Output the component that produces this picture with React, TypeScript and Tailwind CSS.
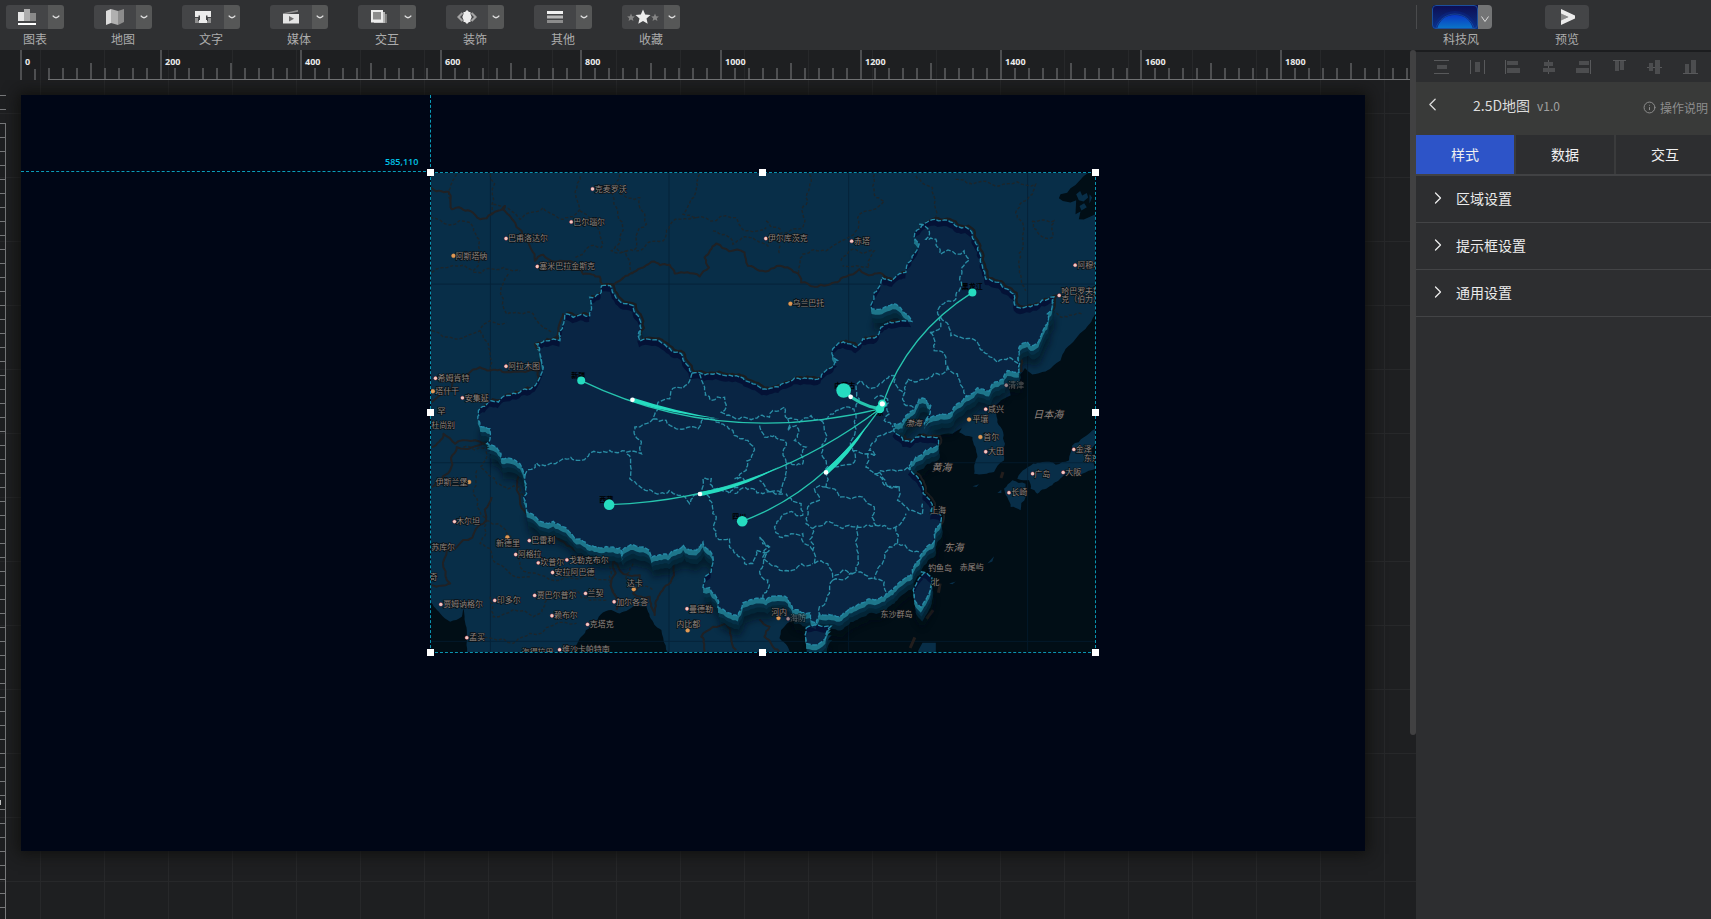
import type { ReactNode } from "react";
import { ChevronLeft, ChevronRight, Info } from "lucide-react";

/* ---------- toolbar icons ---------- */

const ChartIcon = () => (
  <svg width="18" height="16" viewBox="0 0 18 16">
    <path d="M0 3h6v9H0z" fill="#e6e6e6" />
    <path d="M6 0h6v12H6z" fill="#adadad" />
    <path d="M12 4h6v8h-6z" fill="#8a8a8a" />
    <path d="M0 14h18v2H0z" fill="#fff" />
  </svg>
);
const MapIcon = () => (
  <svg width="18" height="16" viewBox="0 0 18 16">
    <path d="M0 2l5-2v14l-5 2z" fill="#dcdcdc" />
    <path d="M5 0l7 2v14l-7-2z" fill="#b0b0b0" />
    <path d="M12 2l6-2v13l-6 3z" fill="#8c8c8c" />
  </svg>
);
const TextIcon = () => (
  <svg width="16" height="12" viewBox="0 0 16 12">
    <path d="M0 0h16v6h-3.500V4.500H11V9h1v3H4V9h1V4.500H3.500V6H0z" fill="#ececec" />
    <path d="M0 7h3v3h1v2H0zM16 7h-3v3h-1v2h4z" fill="#8f8f8f" />
  </svg>
);
const MediaIcon = () => (
  <svg width="16" height="14" viewBox="0 0 16 14">
    <path d="M0 3.2L15 0v1.8L3 4H0z" fill="#8f8f8f" />
    <path d="M0 4h16v9.5H0z" fill="#e4e4e4" />
    <path d="M6 6l5 2.8L6 11.5z" fill="#6e6e6e" />
  </svg>
);
const InteractIcon = () => (
  <svg width="16" height="14" viewBox="0 0 16 14">
    <path d="M12 2h2v11H3v-1h9z" fill="#b5b5b5" />
    <path d="M14 4h2v9h-2z" fill="#808080" />
    <path d="M0 0h12v12.5H0z" fill="#ececec" />
    <path d="M2 2h8v7.500H2z" fill="#8c8c8c" />
  </svg>
);
const DecorIcon = () => (
  <svg width="20" height="14" viewBox="0 0 20 14">
    <path d="M5.500 3L1.500 7l4 4M14.500 3l4 4-4 4" fill="none" stroke="#a3a3a3" strokeWidth="2.200" />
    <path d="M10 0l2 2h1.500v2l1.200 3-1.200 3v2H12l-2 2-2-2H6.500v-2L5.300 7l1.200-3V2H8z" fill="#ececec" />
  </svg>
);
const OtherIcon = () => (
  <svg width="16" height="12" viewBox="0 0 16 12">
    <path d="M0 0h16v3H0z" fill="#f0f0f0" />
    <path d="M0 4.500h16v3H0z" fill="#b8b8b8" />
    <path d="M0 9h16v3H0z" fill="#8c8c8c" />
  </svg>
);
const STAR = "M0-7.500L2.200-2.400 7.500-2 3.500 1.500 4.700 6.700 0 3.900-4.700 6.700-3.500 1.500-7.500-2-2.200-2.400z";
const StarsIcon = () => (
  <svg width="32" height="16" viewBox="-16 -8 32 16">
    <path d={STAR} fill="#ececec" />
    <path d={STAR} fill="#858585" transform="translate(-12 .5) scale(.52)" />
    <path d={STAR} fill="#858585" transform="translate(12 .5) scale(.52)" />
  </svg>
);

const tools: { label: string; icon: ReactNode }[] = [
  { label: "图表", icon: <ChartIcon /> },
  { label: "地图", icon: <MapIcon /> },
  { label: "文字", icon: <TextIcon /> },
  { label: "媒体", icon: <MediaIcon /> },
  { label: "交互", icon: <InteractIcon /> },
  { label: "装饰", icon: <DecorIcon /> },
  { label: "其他", icon: <OtherIcon /> },
  { label: "收藏", icon: <StarsIcon /> },
];

function Toolbar() {
  return (
    <header className="flex h-[50px] shrink-0 justify-between bg-[#2f3032] pt-[5px]">
      <div className="flex gap-[30px] pl-1.5">
        {tools.map((t) => (
          <div key={t.label} className="flex w-[58px] flex-col items-center">
            <div className="flex h-6 w-full overflow-hidden rounded-[3px]">
              <button aria-label={t.label} className="flex w-[42px] items-center justify-center bg-[#444547]">
                {t.icon}
              </button>
              <button aria-label={`${t.label} 更多`} className="flex flex-1 items-center justify-center bg-[#565757] text-[#dedede]">
                <svg width="8" height="4" viewBox="0 0 8 4">
                  <path d="M.7.7Q4 4.800 7.300.7" fill="none" stroke="currentColor" strokeWidth="1.300" />
                </svg>
              </button>
            </div>
            <span className="text-xs leading-[19px] text-[#acacac]">{t.label}</span>
          </div>
        ))}
      </div>
      <div className="flex w-[295px] gap-[53px]">
        <div className="flex gap-[15px]">
          <div className="h-6 w-px bg-[#4a4b4d]" />
          <div className="flex w-[60px] flex-col items-center">
            <button aria-label="科技风" className="flex h-6 w-full overflow-hidden rounded-[4px]">
              <svg width="46" height="24" viewBox="0 0 46 24">
                <defs>
                  <linearGradient id="sky" x1="0" y1="0" x2="0" y2="1">
                    <stop offset="0" stopColor="#0d0d52" />
                    <stop offset="1" stopColor="#0a3488" />
                  </linearGradient>
                  <linearGradient id="sun" x1="0" y1="0" x2="0" y2="1">
                    <stop offset="0" stopColor="#0a38c4" />
                    <stop offset="1" stopColor="#0a78c8" />
                  </linearGradient>
                </defs>
                <path d="M0 0h46v24H0z" fill="url(#sky)" />
                <circle cx="23" cy="29" r="23" fill="#0c2f9a" opacity=".35" />
                <circle cx="23" cy="29" r="20" fill="none" stroke="#1a58a8" opacity=".6" />
                <path d="M5 24Q9 10 23 10t18 14z" fill="url(#sun)" />
                <rect x=".5" y=".5" width="45" height="23" rx="3.500" fill="none" stroke="#1b4f9c" />
              </svg>
              <span className="flex h-full flex-1 items-center justify-center bg-[#737475] pt-1 text-[#dcdcdc]">
                <svg width="8" height="7" viewBox="0 0 8 7">
                  <path d="M.5.5L4 5.500 7.500.5" fill="none" stroke="currentColor" />
                </svg>
              </span>
            </button>
            <span className="pr-0.5 text-xs leading-[19px] text-[#acacac]">科技风</span>
          </div>
        </div>
        <div className="flex flex-col items-center">
          <button aria-label="预览" className="flex h-6 w-11 items-center justify-center rounded-[4px] bg-[#444547] pl-0.5">
            <svg width="14" height="16" viewBox="0 0 14 16">
              <path d="M0 4l7 4-7 4z" fill="#8a8a8a" />
              <path d="M0 0l14 6.500v3L0 16v-4.500L7.500 8 0 4.500z" fill="#ececec" />
            </svg>
          </button>
          <span className="text-xs leading-[19px] text-[#acacac]">预览</span>
        </div>
      </div>
    </header>
  );
}

/* ---------- rulers ---------- */

const TEN = [0, 1, 2, 3, 4, 5, 6, 7, 8, 9];

function HorizontalRuler() {
  return (
    <div className="mr-1.5 flex h-[30px] shrink-0 overflow-hidden pl-5">
      {TEN.map((m) => (
        <div key={m} className="relative flex w-[140px] shrink-0">
          {TEN.map((i) => (
            <div
              key={i}
              className={`flex w-3.5 items-end ${m === 0 && i < 2 ? "" : "border-b border-[#6f7072]"}`}
            >
              <div
                className={`w-0.5 bg-[#4e4f51] ${i === 0 ? "h-[30px]" : i === 5 ? "h-4" : "h-[11px]"}`}
              />
            </div>
          ))}
          <span className="absolute left-[5px] top-1.5 font-[Open_Sans,Noto_Sans,sans-serif] text-[9px] font-bold leading-[11px] text-[#ececec]">
            {m * 200}
          </span>
        </div>
      ))}
    </div>
  );
}

const verticalTicks = Array.from({ length: 59 }, (_, i) => i);

function VerticalRuler() {
  return (
    <div className="mt-[15px] flex w-1.5 shrink-0 flex-col overflow-hidden">
      {verticalTicks.map((i) => (
        <div
          key={i}
          className={`flex h-3.5 shrink-0 items-center border-t border-t-[#77787a] ${i < 2 ? "" : "border-r border-r-[#77787a]"}`}
        >
          {i === 50 && <div className="h-[5px] w-px bg-[#c0c0c0]" />}
        </div>
      ))}
    </div>
  );
}

/* ---------- map geometry ---------- */

type Pt = [number, number];

const parse = (s: string): Pt[] => s.trim().split(/\s+/).map((p) => p.split(",").map(Number) as Pt);

/* Midpoint displacement gives the simplified outlines a natural, jagged coast. */
function rough(src: string, amount = 0.16, close = false) {
  let pts = parse(src);
  if (close) pts = [...pts, pts[0]];
  for (let pass = 0; pass < 3; pass++) {
    const next: Pt[] = [pts[0]];
    for (let i = 1; i < pts.length; i++) {
      const [ax, ay] = pts[i - 1];
      const [bx, by] = pts[i];
      const h = Math.sin(ax * 12.9 + ay * 78.2 + bx * 37.7 + by * 4.1) * 43758.5;
      const k = (h - Math.floor(h) - 0.5) * 2 * amount;
      if (Math.hypot(bx - ax, by - ay) > 12) {
        next.push([(ax + bx) / 2 - (by - ay) * k, (ay + by) / 2 + (bx - ax) * k]);
      }
      next.push([bx, by]);
    }
    pts = next;
  }
  return "M" + pts.map((p) => `${p[0].toFixed(1)} ${p[1].toFixed(1)}`).join("L") + (close ? "Z" : "");
}

const MAINLAND = rough(
  `545,405 572,405 578,425 603,455 640,465 655,495 663,515 655,555 660,572 735,582 765,605 785,610 795,635 817,668
  870,670 950,675 1000,700 1060,712 1125,683 1205,680 1225,655 1255,630 1240,615 1245,590 1258,577 1310,590 1330,565
  1365,562 1385,530 1440,512 1478,512 1465,492 1445,472 1430,460 1395,470 1380,476 1357,474 1355,463 1365,425 1388,380
  1420,390 1460,365 1475,330 1500,280 1484,262 1487,245 1515,218 1585,208 1615,228 1640,228 1660,250 1675,295 1690,345
  1700,385 1740,395 1765,415 1785,430 1795,470 1835,468 1870,448 1905,438 1900,460 1885,490 1870,545 1850,580 1835,585
  1825,573 1800,590 1802,640 1800,665 1785,665 1765,660 1755,685 1720,700 1710,722 1675,712 1650,735 1625,755 1600,782
  1565,790 1515,822 1530,795 1535,765 1520,745 1500,745 1480,780 1450,818 1425,820 1422,840 1440,855 1452,872 1475,875
  1490,860 1520,860 1555,862 1558,880 1535,892 1510,912 1475,935 1468,955 1490,975 1508,1005 1512,1030 1535,1055
  1540,1070 1535,1090 1565,1095 1560,1125 1545,1150 1540,1180 1510,1205 1500,1230 1480,1270 1450,1290 1410,1325
  1380,1345 1330,1358 1280,1385 1220,1395 1200,1392 1192,1420 1178,1415 1172,1388 1120,1378 1105,1345 1065,1338
  1040,1350 1000,1348 970,1358 955,1398 925,1388 895,1372 890,1340 870,1312 850,1312 855,1285 875,1265 880,1220
  870,1200 850,1175 830,1200 790,1183 745,1215 695,1223 680,1195 640,1183 615,1193 605,1218 600,1193 545,1193
  490,1173 455,1150 400,1113 385,1120 320,1085 310,1040 320,1030 315,975 300,940 245,925 235,900 200,880 210,865
  210,835 180,828 175,780 210,750 235,755 260,735 300,725 355,690 370,650 360,610 350,580 400,565 420,570 418,545
  435,490 460,500 510,495 510,440 540,430`,
  0.17,
  true,
);
const TAIWAN = rough("1505,1265 1522,1268 1538,1282 1530,1330 1515,1355 1505,1372 1485,1345 1482,1320 1500,1285 1515,1268", 0.08, true);
const HAINAN = rough("1160,1434 1195,1425 1235,1428 1218,1465 1200,1480 1160,1480 1158,1460", 0.12, true);
const CHINA = `${MAINLAND}${TAIWAN}${HAINAN}`;

const PROVINCES = [
  "817,668 805,700 770,710 750,745 715,755 712,780 700,805 645,830 665,875 665,910 620,905 570,900 530,905 480,930 425,928 400,940 350,938 315,975",
  "700,805 770,835 835,835 850,805 890,815 940,840 985,870 1000,910 980,960 945,985 975,990 930,1030 905,1020 880,1015 875,985 850,985 845,1025 810,1060 775,1035 720,1030 670,1015 630,985 620,910",
  "840,670 855,710 875,750 915,740 920,770 905,785 950,805 1020,795 1050,800 1060,780 1095,770 1105,805",
  "845,1025 870,1050 890,1100 890,1160 930,1165 950,1210 975,1240 1000,1240 1010,1200 1050,1200 1020,1260 1045,1290 1030,1345",
  "945,1030 1000,1015 1030,1030 1060,1025 1095,1030",
  "1020,825 1035,860 1095,870 1100,940 1095,990 1085,1030 1050,1025 1020,990",
  "1105,805 1105,840 1130,825 1125,870 1160,890 1150,940 1100,940",
  "1105,805 1140,815 1175,795 1205,810 1250,780 1290,770 1310,790",
  "1205,810 1215,840 1210,900 1220,965 1220,1010",
  "1310,790 1310,835 1300,900 1305,935 1270,945 1220,965",
  "1300,900 1345,910 1370,915 1350,900 1385,855 1422,840",
  "1345,910 1340,950 1365,970 1405,960 1460,955 1475,940",
  "1220,1010 1260,1040 1330,1040 1365,1070 1370,1125 1340,1125 1290,1125 1270,1135 1220,1115 1180,1135 1180,1200 1185,1240",
  "1220,1010 1185,1015 1200,1050 1170,1065 1160,1120 1180,1135",
  "1365,970 1390,995 1440,1010 1435,1050 1470,1080 1510,1092 1510,1060",
  "1440,1010 1400,1000 1380,965",
  "1370,1125 1420,1135 1430,1130 1460,1090",
  "1430,1130 1435,1180 1470,1200 1500,1205",
  "1315,1125 1310,1180 1310,1260 1365,1285",
  "1435,1180 1395,1210 1370,1270 1365,1285 1395,1295 1400,1325",
  "1185,1240 1225,1240 1240,1280 1310,1265",
  "1240,1290 1230,1330 1200,1370 1200,1392",
  "1240,1290 1310,1265",
  "1020,1160 1050,1190 1030,1220 1080,1260 1120,1260 1180,1240",
  "1180,1200 1150,1150 1080,1160 1065,1130 1085,1100 1150,1095 1145,1060 1100,1030",
  "1050,1190 1020,1165",
  "1500,220 1530,240 1520,265 1550,265 1565,310 1625,310 1635,300 1650,325 1628,370 1628,405 1605,450 1555,485 1565,530 1530,545 1545,600 1575,610 1585,650 1530,680 1480,690 1465,685 1450,740 1460,765 1490,775",
  "1565,500 1595,555 1675,575 1705,610 1735,635 1770,620 1800,640",
  "1585,645 1615,670 1630,710 1645,740",
  "1310,770 1320,745 1310,705 1325,690 1345,710 1400,685 1425,675 1435,710 1455,735",
  "1365,745 1385,735 1405,745 1410,790 1395,810 1422,830",
];
const PROVINCE_PATH = PROVINCES.map((p) => rough(p, 0.22)).join("");

const SEA = [
  rough("2090,470 2030,488 2000,535 1970,565 1940,595 1925,630 1880,663 1840,672 1818,652 1795,690 1770,712 1775,735 1720,770 1690,790 1600,850 1500,850 1450,900 1500,1100 1540,1200 1400,1380 1150,1400 1110,1415 1085,1440 1080,1465 1105,1490 1115,1530", 0.06) + "L1115 1600H2200V470Z",
  rough("25,1345 60,1390 90,1415 125,1400 130,1375 140,1440 147,1530", 0.06) + "L20 1600Z",
  rough("430,1530 480,1465 520,1420 575,1380 600,1390 650,1365 680,1370 690,1400 725,1440 758,1530", 0.12) + "Z",
  "M2030 50L1995 75L1970 102L1955 112L1945 125L1925 130L1920 142L1932 150L1955 155L1972 148L1970 190L1985 182L1980 205L1995 206L2030 190Z",
].join("");
const ISLANDS = [
  rough("1620,845 1670,790 1720,752 1735,815 1758,880 1755,930 1725,965 1665,970 1675,920 1660,860", 0.1, true),
  rough("1795,985 1820,955 1870,935 1950,930 1960,885 2030,835 2030,955 1990,970 1940,970 1920,990 1900,1005 1855,1030 1835,1015 1830,990", 0.14, true),
  rough("1755,1015 1780,990 1820,1000 1820,1040 1805,1080 1775,1070 1765,1040", 0.14, true),
  "M1510 1478H1550V1530H1490L1498 1500Z",
  "M1972 130l12-10 6 14 14-8 4 14-14 12-14-4zM1982 165l14-8 8 12-16 10zM2012 130l8 10-8 18zM1660 1008l20-6-8 8zM1705 1240l20-22-5 16zM1590 1300l20-6-10 8zM1735 1028l12-10 0 10z",
].join("");

const COUNTRIES = [
  "30,110 85,122 95,175 150,180 180,205 215,190 255,165 245,175 285,215 310,260 345,330 370,312 385,325 420,330 460,335 490,370 540,378 550,405",
  "560,405 600,390 650,360 695,333 750,342 765,368 840,377 868,350 855,320 890,278 975,305 985,345 1020,360 1090,347 1140,375 1145,395 1225,403 1280,378 1320,355 1360,372 1390,370 1420,390",
  "430,488 410,560 345,580 365,615 355,690",
  "360,660 270,665 210,660 180,650 100,680 90,720 35,755",
  "35,890 70,850 105,880 200,880 110,890 90,960 35,1010",
  "215,1040 190,1120 110,1190 80,1200 90,1300 35,1305",
  "300,925 300,1050 320,1090 400,1155 490,1200 590,1200",
  "770,1230 755,1290 715,1340 705,1395 690,1340 640,1330 660,1275 600,1260 580,1230 590,1380",
  "855,1505 845,1460 880,1430 920,1420 950,1500",
  "1020,1408 1050,1430 1035,1460 1080,1505",
].map((p) => rough(p, 0.16)).join("");
const REGIONS = [
  "110,70 85,120 90,145", "210,70 215,190", "220,160 300,205 370,170 430,205 480,175 480,70", "480,180 540,250 545,290 465,320",
  "600,70 590,170 600,260 575,300 620,300 640,370", "600,130 660,140 680,220 640,300 590,290", "840,70 830,120 790,190 830,200 760,210 730,270 650,300",
  "830,200 950,200 980,240 1040,230", "880,240 940,280 1000,260 1050,290", "30,200 150,215 175,285 160,360 35,365", "160,365 250,350 300,360",
  "265,370 260,490 340,490 400,545", "35,540 180,540 210,510 260,515", "180,540 210,600 210,660", "1170,70 1165,150 1150,230 1080,250 1080,310",
  "1365,70 1370,140 1395,150 1315,200 1310,240 1220,300 1150,310 1140,370", "1265,330 1300,295 1365,300 1350,350 1270,345",
  "1490,75 1540,110 1545,210", "1610,85 1660,100 1740,105 1850,100 1840,130 1790,185 1815,240 1800,330 1820,420", "1840,210 1905,210 1900,260 1860,250 1840,210",
  "130,890 200,890 180,950 230,1000 300,1010 330,1060", "170,960 160,1020 200,1110 180,1180 230,1240 330,1280", "200,1110 260,1150 300,1250 420,1290 570,1290",
  "210,1340 220,1400 340,1400 380,1340 470,1320 560,1350", "150,1450 280,1480 330,1450 470,1420", "560,1220 570,1300 590,1340", "640,1240 620,1290 700,1320",
  "1900,480 1930,500 1990,490", "1040,210 1085,240",
].map((p) => rough(p, 0.18)).join("");

/* kind: r = red city dot, o = orange capital dot; text starts at x. */
type City = [string, number, number, ("r" | "o" | "")?, number?, number?];
const CITIES: City[] = [
  ["克麦罗沃", 525, 112, "r", 518, 114], ["巴尔瑙尔", 460, 211, "r", 454, 213], ["巴甫洛达尔", 264, 261, "r", 258, 263],
  ["阿斯塔纳", 106, 313, "o", 100, 315], ["塞米巴拉金斯克", 358, 345, "r", 352, 347], ["阿拉木图", 264, 645, "r", 258, 647],
  ["希姆肯特", 52, 681, "r", 46, 683], ["塔什干", 45, 720, "o", 38, 722], ["安集延", 134, 740, "r", 127, 742],
  ["杜尚别", 33, 823], ["罕", 52, 781], ["伊斯兰堡", 46, 993, "o", 147, 995], ["木尔坦", 108, 1111, "r", 103, 1114],
  ["苏库尔", 33, 1190], ["奇", 28, 1279], ["新德里", 228, 1177, "o", 262, 1161], ["巴雷利", 334, 1168, "r", 328, 1171],
  ["阿格拉", 293, 1210, "r", 287, 1213], ["坎普尔", 361, 1235, "r", 355, 1238], ["戈勒克布尔", 447, 1227, "r", 441, 1229],
  ["安拉阿巴德", 404, 1265, "r", 398, 1267], ["达卡", 621, 1297, "o", 642, 1317], ["贾巴尔普尔", 350, 1334, "r", 344, 1336],
  ["兰契", 503, 1327, "r", 497, 1330], ["加尔各答", 589, 1353, "r", 583, 1355], ["印多尔", 230, 1348, "r", 224, 1351],
  ["贾姆讷格尔", 69, 1361, "r", 62, 1363], ["赖布尔", 402, 1394, "r", 396, 1397], ["克塔克", 510, 1420, "r", 503, 1423],
  ["孟买", 147, 1460, "r", 140, 1463], ["维沙卡帕特南", 426, 1497, "r", 419, 1499], ["海得拉巴", 305, 1506], ["曼德勒", 808, 1374, "r", 802, 1376],
  ["内比都", 770, 1421, "o", 804, 1441], ["河内", 1055, 1383, "o", 1077, 1404],
  ["伊尔库茨克", 1045, 261, "r", 1039, 263], ["赤塔", 1304, 269, "r", 1297, 271], ["乌兰巴托", 1119, 456, "o", 1113, 459],
  ["阿穆尔", 1975, 341, "r", 1969, 343], ["哈巴罗夫斯", 1927, 420, "r", 1921, 434], ["克（伯力）", 1927, 443],
  ["咸兴", 1707, 773, "r", 1700, 776], ["平壤", 1660, 804, "o", 1650, 807], ["首尔", 1693, 857, "o", 1684, 860],
  ["大田", 1707, 901, "r", 1700, 904], ["金泽", 1971, 895, "r", 1965, 897], ["东京", 1995, 922], ["大阪", 1939, 963, "r", 1933, 966],
  ["广岛", 1846, 968, "r", 1841, 970], ["长崎", 1777, 1025, "r", 1770, 1027], ["上海", 1533, 1078], ["钓鱼岛", 1527, 1253],
  ["赤尾屿", 1622, 1250], ["北", 1537, 1293], ["东沙群岛", 1384, 1390],
];
/* Places partly hidden by the raised edge of the country. */
const FADED: City[] = [
  ["海防", 1112, 1403, "r", 1106, 1406], ["清津", 1768, 702, "r", 1762, 704],
];
const SEAS: [string, number, number, number][] = [
  ["日本海", 1843, 789, 30], ["黄海", 1537, 949, 30], ["东海", 1573, 1189, 30], ["渤海", 1460, 816, 24],
];
const ENDPOINTS: [string, number, number, number, number, number][] = [
  ["新疆", 484, 690, 12, 454, 673], ["西藏", 568, 1063, 16, 538, 1045], ["四川", 968, 1113, 16, 938, 1096],
  ["黑龙江", 1660, 425, 12, 1628, 407], ["内蒙古", 1273, 720, 22, 1245, 704],
];

const renderCity = ([name, x, y, kind, dx, dy]: City) => (
  <g key={name}>
    {kind && (
      <circle
        cx={dx}
        cy={dy}
        r={kind === "o" ? 6 : 5}
        fill={kind === "o" ? "#e09a55" : "#f3c9c4"}
        stroke={kind === "o" ? "#8a5a33" : "#c8343c"}
        strokeWidth="2"
      />
    )}
    <text x={x} y={y}>{name}</text>
  </g>
);

function FlyingLinesMap() {
  return (
    <svg className="block size-full" viewBox="33 66 1995 1440" role="img" aria-label="2.5D地图">
      <defs>
        <clipPath id="china">
          <path d={CHINA} />
        </clipPath>
        <filter id="soft" x="-5%" y="-5%" width="110%" height="110%">
          <feGaussianBlur stdDeviation="9" />
        </filter>
      </defs>
      <path d="M0 0h2100v1600H0z" fill="#082e48" />
      <path d={SEA} fill="#010e16" />
      <path d={ISLANDS} fill="#082e48" />
      <path d="M211 0V1600M748 0V1600M1288 0V1600M1826 0V1600M0 400H2100M0 937H2100M0 1474H2100" stroke="#041e33" strokeWidth="3" opacity=".7" />
      <path d={REGIONS} fill="none" stroke="#1e2529" strokeWidth="4" strokeDasharray="9 6" />
      <path d={COUNTRIES} fill="none" stroke="#202124" strokeWidth="6" strokeLinejoin="round" />
      <path d="M1563 1300l-5 28M1542 1380l-20 26M1487 1462l-14 32M1752 965l-6 18" stroke="#231e1d" strokeWidth="9" />

      <path d={CHINA} transform="translate(6 62)" fill="#010c18" opacity=".55" filter="url(#soft)" />
      <path d={MAINLAND} transform="translate(8 -4)" fill="none" stroke="#1b1d20" strokeWidth="6" />
      <path d={CHINA} transform="translate(4 42)" fill="#04293c" opacity=".85" />
      <path d={CHINA} transform="translate(2 28)" fill="#053047" />
      <path d={CHINA} transform="translate(0 16)" fill="#1e768b" />
      <path d={CHINA} transform="translate(0 8)" fill="#1e768b" />
      <path d={CHINA} fill="#041236" />
      <g clipPath="url(#china)">
        <path d={CHINA} transform="translate(-2 18)" fill="#092544" />
      </g>
      <path d={PROVINCE_PATH} fill="none" stroke="#2a8ea6" strokeWidth="4" strokeDasharray="14 5" />
      <path d={CHINA} fill="none" stroke="#258ba8" strokeWidth="4" strokeDasharray="14 5" />

      <g fontSize="24" fill="#8b8580" stroke="#0b0f13" strokeWidth="4" paintOrder="stroke" dominantBaseline="central">
        <g opacity=".6">{FADED.map(renderCity)}</g>
        {CITIES.map(renderCity)}
        {SEAS.map(([name, x, y, size]) => (
          <text key={name} x={x} y={y} fontSize={size} fontStyle="italic">{name}</text>
        ))}
      </g>

      <g fill="#000" fontSize="21" dominantBaseline="central" fontWeight="bold">
        {ENDPOINTS.map(([name, , , , tx, ty]) => (
          <text key={name} x={tx} y={ty}>{name}</text>
        ))}
        <text x="1352" y="784">北京</text>
      </g>
      <g fill="none" stroke="#26c4ae" strokeWidth="4">
        <path d="M484 690Q900 892 1382 775" />
        <path d="M568 1063Q1025 1047 1382 775" />
        <path d="M968 1113Q1205 1026 1382 775" />
        <path d="M1660 425Q1465 548 1390 760" />
        <path d="M1273 720Q1320 765 1382 775" strokeWidth="9" />
      </g>
      <g fill="#26dcc0">
        <path d="M640 742Q770 784 900 805Q765 792 636 754z" />
        <path d="M840 1025Q960 1006 1080 948Q980 1010 842 1038z" />
        <path d="M1216 960Q1275 908 1345 825Q1290 915 1225 972z" />
        {ENDPOINTS.map(([name, cx, cy, r]) => (
          <circle key={name} cx={cx} cy={cy} r={r} />
        ))}
        <circle cx="1382" cy="775" r="13" />
        <circle cx="1389" cy="760" r="13" />
      </g>
      <g fill="#fff">
        <circle cx="638" cy="748" r="7" />
        <circle cx="841" cy="1031" r="7" />
        <circle cx="1220" cy="966" r="7" />
        <circle cx="1294" cy="739" r="7" />
        <circle cx="1389" cy="760" r="8" />
      </g>
    </svg>
  );
}

/* ---------- workspace ---------- */

const HANDLES = [
  "-left-1 -top-1", "left-1/2 -ml-1 -top-1", "-right-1 -top-1",
  "-left-1 top-1/2 -mt-1", "-right-1 top-1/2 -mt-1",
  "-left-1 -bottom-1", "left-1/2 -ml-1 -bottom-1", "-right-1 -bottom-1",
];

function Workspace() {
  return (
    <main className="relative flex min-w-0 flex-1 flex-col overflow-hidden bg-[#1e1f21] bg-[linear-gradient(to_right,#27282a_1px,transparent_1px),linear-gradient(to_bottom,#27282a_1px,transparent_1px)] bg-[size:64px_64px] bg-[position:40px_63px]">
      <HorizontalRuler />
      <div className="flex min-h-0 flex-1 overflow-hidden">
        <VerticalRuler />
        <div className="relative ml-[15px] mt-[15px] h-[756px] w-[1344px] shrink-0 bg-[#000616] shadow-[0_0_14px_3px_rgba(16,16,14,0.95)]">
          <div className="absolute left-0 top-[76px] w-[410px] border-t border-dashed border-[#0a9cb8]" />
          <div className="absolute left-[409px] top-0 h-[77px] border-l border-dashed border-[#0a9cb8]" />
          <span className="absolute left-[364px] top-[61px] font-[Open_Sans,Noto_Sans,sans-serif] text-[9px] font-semibold leading-3 text-[#00c4e8]">
            585,110
          </span>
          <div className="absolute left-[409px] top-[77px] h-[481px] w-[666px] border border-dashed border-[#0a93ae]">
            <FlyingLinesMap />
            {HANDLES.map((pos) => (
              <div key={pos} className={`absolute size-[7px] bg-white ${pos}`} />
            ))}
          </div>
        </div>
      </div>
      <div className="absolute right-0 top-0 h-[685px] w-1.5 rounded-full bg-[#414142]" />
    </main>
  );
}

/* ---------- right panel ---------- */

const ALIGN: { label: string; lines: string; bars: string }[] = [
  { label: "垂直分布", lines: "M0 0h15v1H0zM0 13h15v1H0z", bars: "M3 5h10v4H3z" },
  { label: "水平分布", lines: "M0 0h1v14H0zM14 0h1v14h-1z", bars: "M5 2h5v10H5z" },
  { label: "左对齐", lines: "M0 0h1v14H0z", bars: "M2 1h11v4H2zM2 8h13v5H2z" },
  { label: "水平居中", lines: "M7 0h1v14H7z", bars: "M3 2h9v4H3zM2 8h12v4H2z" },
  { label: "右对齐", lines: "M14 0h1v14h-1z", bars: "M3 1h10v4H3zM0 8h13v5H0z" },
  { label: "顶对齐", lines: "M1 0h13v1H1z", bars: "M3 1h4v10H3zM8 1h4v9H8z" },
  { label: "垂直居中", lines: "M0 7h15v1H0z", bars: "M2 3h4v8H2zM8 0h5v14H8z" },
  { label: "底对齐", lines: "M0 13h15v1H0z", bars: "M2 4h4v9H2zM8 0h5v13H8z" },
];

const TABS = ["样式", "数据", "交互"];
const SECTIONS = ["区域设置", "提示框设置", "通用设置"];

function SidePanel() {
  return (
    <aside className="w-[295px] shrink-0 overflow-hidden border-t-2 border-[#1c1d1f] bg-[#2d2e30]">
      <div className="flex h-[30px] items-center justify-between pl-[18px] pr-[13px]">
        {ALIGN.map((a) => (
          <button key={a.label} aria-label={a.label} className="w-[15px] shrink-0">
            <svg className="block" width="15" height="14" viewBox="0 0 15 14">
              <path d={a.lines} fill="#58595b" />
              <path d={a.bars} fill="#4c4d4f" />
            </svg>
          </button>
        ))}
      </div>
      <div className="flex h-[53px] items-center bg-[#393a39] pb-2">
        <button aria-label="返回" className="pl-1.5 text-[#dcdcdc]">
          <ChevronLeft size={21} strokeWidth={1.500} />
        </button>
        <h1 className="ml-[30px] text-sm leading-5 text-[#dcdcdc]">2.5D地图</h1>
        <span className="ml-[7px] mt-0.5 text-xs text-[#a0a0a0]">v1.0</span>
        <a href="#help" className="ml-auto mr-[3px] mt-1.5 flex items-center gap-1 text-xs text-[#8e8e8e]">
          <Info size={13} strokeWidth={1.800} />
          操作说明
        </a>
      </div>
      <div className="flex gap-0.5 border-b-2 border-[#414244] bg-[#3a3b3c]" role="tablist">
        {TABS.map((t, i) => (
          <button
            key={t}
            role="tab"
            aria-selected={i === 0}
            className={`h-[39px] w-[98px] shrink-0 pb-0.5 text-sm text-[#f0f0f0] ${i === 0 ? "bg-[#2d54c8]" : "bg-[#2d2e30]"}`}
          >
            {t}
          </button>
        ))}
      </div>
      {SECTIONS.map((s) => (
        <button
          key={s}
          className="flex h-[47px] w-full items-center gap-2 border-b border-[#434446] pb-0.5 pl-3 text-sm text-[#ececec]"
        >
          <ChevronRight size={20} strokeWidth={1.500} />
          {s}
        </button>
      ))}
    </aside>
  );
}

export default function App() {
  return (
    <div className="flex h-screen flex-col overflow-hidden bg-[#1e1f21] font-[Noto_Sans_CJK_SC,sans-serif]">
      <Toolbar />
      <div className="flex min-h-0 flex-1">
        <Workspace />
        <SidePanel />
      </div>
    </div>
  );
}
